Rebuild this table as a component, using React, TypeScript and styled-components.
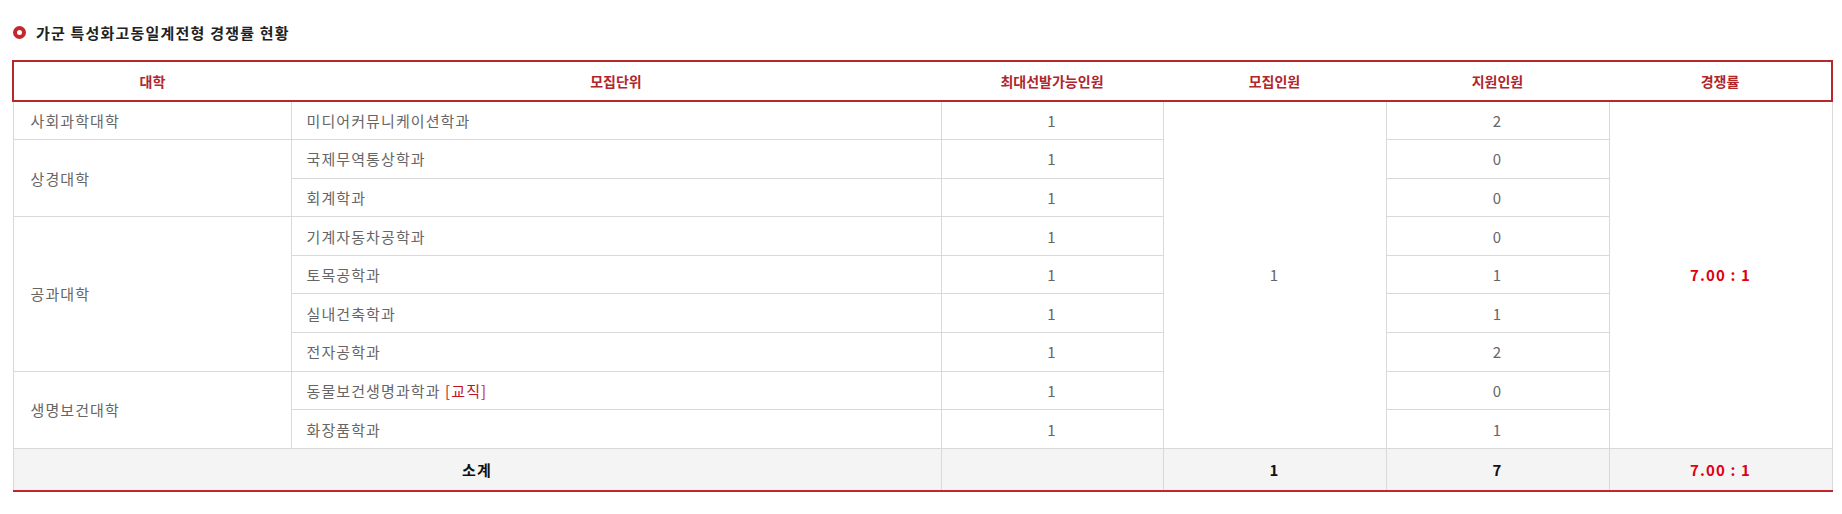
import React from 'react'
import styled, { createGlobalStyle } from 'styled-components'

const GlobalStyle = createGlobalStyle`
  body {
    margin: 0;
    background: #fff;
    font-family: 'Noto Sans CJK KR', 'Noto Sans', sans-serif;
  }
`

const Page = styled.div`
  padding: 20px 11px 20px 12px;
`

const TitleRow = styled.div`
  display: flex;
  align-items: center;
  gap: 10px;
  height: 24px;
  margin-bottom: 16px;
`

const Bullet = styled.span`
  width: 13px;
  height: 13px;
  border-radius: 50%;
  border: 4px solid #c6262e;
  box-sizing: border-box;
  margin-left: 1px;
`

const Title = styled.h3`
  margin: 0;
  font-size: 15px;
  font-weight: 700;
  color: #222;
  letter-spacing: 1.2px;
`

const Table = styled.table`
  width: 1819px;
  border-collapse: collapse;
  table-layout: fixed;
  font-size: 15px;
  letter-spacing: 1.1px;
`

const Th = styled.th`
  height: 38px;
  padding: 0;
  font-size: 14px;
  letter-spacing: 0;
  font-weight: 700;
  color: #b1252d;
  text-align: center;
  border-top: 2px solid #b8262e;
  border-bottom: 2px solid #b8262e;
  &:first-child { border-left: 2px solid #b8262e; }
  &:last-child { border-right: 2px solid #b8262e; }
`

const Row = styled.tr`
  height: 38.6px;
`

const Td = styled.td<{ $left?: number; $red?: boolean }>`
  padding: 0 0 0 ${(p) => (p.$left ? `${p.$left}px` : '0')};
  text-align: ${(p) => (p.$left ? 'left' : 'center')};
  color: ${(p) => (p.$red ? '#e00012' : '#666')};
  font-weight: ${(p) => (p.$red ? 700 : 400)};
  border: 1px solid #d9d9d9;
`

const Tag = styled.span`
  color: #c1141e;
`

const FootRow = styled.tr`
  height: 43px;
  background: #f4f4f4;
`

const FootTd = styled.td<{ $red?: boolean }>`
  padding: 0;
  text-align: center;
  font-weight: 700;
  color: ${(p) => (p.$red ? '#e00012' : '#111')};
  border: 1px solid #d9d9d9;
  border-bottom: 2px solid #c0272d;
`

type Dept = { name: string; tag?: string; max: number; applied: number }
type College = { name: string; depts: Dept[] }

const colleges: College[] = [
  { name: '사회과학대학', depts: [{ name: '미디어커뮤니케이션학과', max: 1, applied: 2 }] },
  {
    name: '상경대학',
    depts: [
      { name: '국제무역통상학과', max: 1, applied: 0 },
      { name: '회계학과', max: 1, applied: 0 },
    ],
  },
  {
    name: '공과대학',
    depts: [
      { name: '기계자동차공학과', max: 1, applied: 0 },
      { name: '토목공학과', max: 1, applied: 1 },
      { name: '실내건축학과', max: 1, applied: 1 },
      { name: '전자공학과', max: 1, applied: 2 },
    ],
  },
  {
    name: '생명보건대학',
    depts: [
      { name: '동물보건생명과학과', tag: '[교직]', max: 1, applied: 0 },
      { name: '화장품학과', max: 1, applied: 1 },
    ],
  },
]

const totalRows = colleges.reduce((n, c) => n + c.depts.length, 0)

export default function App() {
  return (
    <Page>
      <GlobalStyle />
      <TitleRow>
        <Bullet />
        <Title>가군 특성화고동일계전형 경쟁률 현황</Title>
      </TitleRow>
      <Table>
        <colgroup>
          <col style={{ width: 278 }} />
          <col style={{ width: 650 }} />
          <col style={{ width: 222 }} />
          <col style={{ width: 223 }} />
          <col style={{ width: 223 }} />
          <col style={{ width: 223 }} />
        </colgroup>
        <thead>
          <tr>
            <Th>대학</Th>
            <Th>모집단위</Th>
            <Th>최대선발가능인원</Th>
            <Th>모집인원</Th>
            <Th>지원인원</Th>
            <Th>경쟁률</Th>
          </tr>
        </thead>
        <tbody>
          {colleges.map((c, ci) =>
            c.depts.map((d, di) => (
              <Row key={`${ci}-${di}`}>
                {di === 0 && (
                  <Td $left={17} rowSpan={c.depts.length}>
                    {c.name}
                  </Td>
                )}
                <Td $left={15}>
                  {d.name}
                  {d.tag && <> <Tag>{d.tag}</Tag></>}
                </Td>
                <Td>{d.max}</Td>
                {ci === 0 && di === 0 && <Td rowSpan={totalRows}>1</Td>}
                <Td>{d.applied}</Td>
                {ci === 0 && di === 0 && (
                  <Td $red rowSpan={totalRows}>
                    7.00 : 1
                  </Td>
                )}
              </Row>
            ))
          )}
          <FootRow>
            <FootTd colSpan={2}>소계</FootTd>
            <FootTd />
            <FootTd>1</FootTd>
            <FootTd>7</FootTd>
            <FootTd $red>7.00 : 1</FootTd>
          </FootRow>
        </tbody>
      </Table>
    </Page>
  )
}
